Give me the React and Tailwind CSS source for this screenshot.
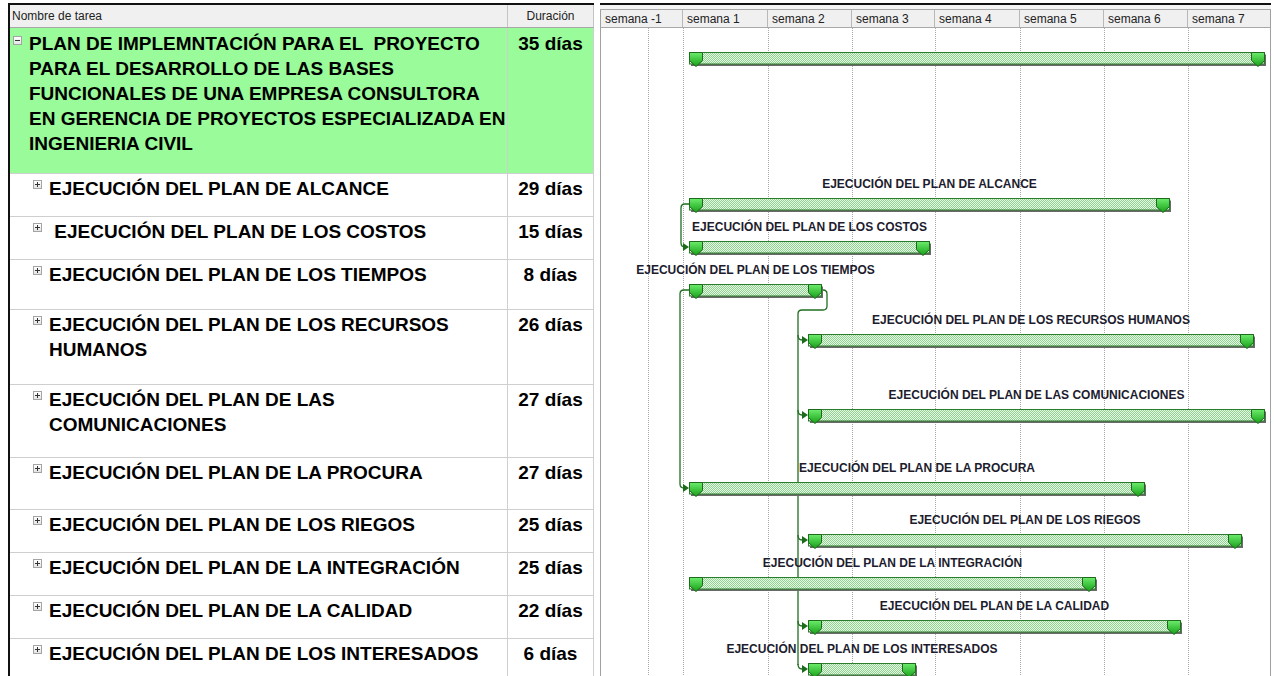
import React from "react";

const weeks = [
  { label: "semana -1", w: "w-[82px]" },
  { label: "semana 1", w: "w-[85px]" },
  { label: "semana 2", w: "w-[84px]" },
  { label: "semana 3", w: "w-[83px]" },
  { label: "semana 4", w: "w-[85px]" },
  { label: "semana 5", w: "w-[84px]" },
  { label: "semana 6", w: "w-[84px]" },
  { label: "semana 7", w: "flex-1" },
];

// x of bars in page pixels, gantt body starts at 601
const tasks = [
  {
    lines: [
      "PLAN DE IMPLEMNTACIÓN PARA EL  PROYECTO",
      "PARA EL DESARROLLO DE LAS BASES",
      "FUNCIONALES DE UNA EMPRESA CONSULTORA",
      "EN GERENCIA DE PROYECTOS ESPECIALIZADA EN",
      "INGENIERIA CIVIL",
    ],
    dur: "35 días",
    h: "h-[146px]",
    summary: true,
    bar: [689, 1265],
  },
  { lines: ["EJECUCIÓN DEL PLAN DE ALCANCE"], label: "EJECUCIÓN DEL PLAN DE ALCANCE", dur: "29 días", h: "h-[43px]", bar: [689, 1170] },
  { lines: [" EJECUCIÓN DEL PLAN DE LOS COSTOS"], label: "EJECUCIÓN DEL PLAN DE LOS COSTOS", dur: "15 días", h: "h-[43px]", bar: [689, 930] },
  { lines: ["EJECUCIÓN DEL PLAN DE LOS TIEMPOS"], label: "EJECUCIÓN DEL PLAN DE LOS TIEMPOS", dur: "8 días", h: "h-[50px]", bar: [689, 822] },
  { lines: ["EJECUCIÓN DEL PLAN DE LOS RECURSOS", "HUMANOS"], label: "EJECUCIÓN DEL PLAN DE LOS RECURSOS HUMANOS", dur: "26 días", h: "h-[75px]", bar: [808, 1254] },
  { lines: ["EJECUCIÓN DEL PLAN DE LAS", "COMUNICACIONES"], label: "EJECUCIÓN DEL PLAN DE LAS COMUNICACIONES", dur: "27 días", h: "h-[73px]", bar: [808, 1265] },
  { lines: ["EJECUCIÓN DEL PLAN DE LA PROCURA"], label: "EJECUCIÓN DEL PLAN DE LA PROCURA", dur: "27 días", h: "h-[52px]", bar: [689, 1145] },
  { lines: ["EJECUCIÓN DEL PLAN DE LOS RIEGOS"], label: "EJECUCIÓN DEL PLAN DE LOS RIEGOS", dur: "25 días", h: "h-[43px]", bar: [808, 1242] },
  { lines: ["EJECUCIÓN DEL PLAN DE LA INTEGRACIÓN"], label: "EJECUCIÓN DEL PLAN DE LA INTEGRACIÓN", dur: "25 días", h: "h-[43px]", bar: [689, 1096] },
  { lines: ["EJECUCIÓN DEL PLAN DE LA CALIDAD"], label: "EJECUCIÓN DEL PLAN DE LA CALIDAD", dur: "22 días", h: "h-[43px]", bar: [808, 1181] },
  { lines: ["EJECUCIÓN DEL PLAN DE LOS INTERESADOS"], label: "EJECUCIÓN DEL PLAN DE LOS INTERESADOS", dur: "6 días", h: "h-[43px]", bar: [808, 916] },
];

const gridX = [47, 82, 167, 251, 334, 419, 503, 587];

function Toggle({ minus }) {
  return (
    <span className="flex w-[9px] h-[9px] border border-[#a4a4a4] bg-gradient-to-b from-white to-[#e4e4e4] items-center justify-center">
      <svg width="5" height="5" viewBox="0 0 5 5" className="block">
        <path d="M0 2.5 H5" stroke="#333" strokeWidth="1" />
        {!minus && <path d="M2.5 0 V5" stroke="#333" strokeWidth="1" />}
      </svg>
    </span>
  );
}

function Bar({ w }) {
  const cap = (x) => `M${x + 0.5} 0.5 H${x + 13.5} V8.5 L${x + 7} 14.5 L${x + 0.5} 8.5 Z`;
  return (
    <svg width={w + 3} height={17} className="block overflow-visible">
      <rect x="2" y="2.5" width={w - 1} height="11.5" fill="#6a6a6a" />
      <rect x="0.5" y="0.5" width={w - 1} height="11.5" fill="url(#barfill)" stroke="#2b7d2b" />
      <path d={cap(0)} fill="url(#capfill)" stroke="#1d6a1d" />
      <path d={cap(w - 14)} fill="url(#capfill)" stroke="#1d6a1d" />
    </svg>
  );
}

function Arrow({ x, y }) {
  return <path d={`M${x - 6} ${y - 4} L${x} ${y} L${x - 6} ${y + 4} Z`} fill="#1b6b1b" />;
}

function Links() {
  const c = "#1f6f1f";
  const targets = [312, 387, 512, 598, 641];
  return (
    <svg className="absolute left-0 top-0 pointer-events-none" width="669" height="660">
      {gridX.map((x) => (
        <line key={x} x1={x + 0.5} y1="0" x2={x + 0.5} y2="660" stroke="#a9a9a9" strokeDasharray="1 1" />
      ))}
      <g fill="none" stroke={c} strokeWidth="1.3">
        <path d="M88 176 H84 Q80 176 80 180 V215 Q80 219 84 219 H86" />
        <path d="M88 262 H83 Q79 262 79 266 V456 Q79 460 83 460 H86" />
        <path d="M221 262 H222 Q226 262 226 266 V278 Q226 282 222 282 H201 Q197 282 197 286 V637" />
        {targets.map((y) => (
          <path key={y} d={`M197 ${y - 5} Q197 ${y} 201 ${y} H205`} />
        ))}
      </g>
      <Arrow x={88} y={219} />
      <Arrow x={88} y={460} />
      {targets.map((y) => (
        <Arrow key={y} x={207} y={y} />
      ))}
    </svg>
  );
}

export default function App() {
  return (
    <div className="w-[1274px] h-[676px] overflow-hidden bg-white font-['Liberation_Sans',Arial,sans-serif] text-black">
      <svg width="0" height="0" className="absolute">
        <defs>
          <pattern id="barfill" width="2" height="2" patternUnits="userSpaceOnUse">
            <rect width="2" height="2" fill="#e8f9e8" />
            <rect width="1" height="1" fill="#8fd28f" />
            <rect x="1" y="1" width="1" height="1" fill="#8fd28f" />
          </pattern>
          <linearGradient id="capfill" x1="0" y1="0" x2="0" y2="1">
            <stop offset="0" stopColor="#6cec6c" />
            <stop offset="1" stopColor="#16a016" />
          </linearGradient>
        </defs>
      </svg>

      <div className="flex pt-[3px] pl-[8px]">
        {/* tabla de tareas */}
        <div className="w-[586px] shrink-0 border-l-2 border-t-2 border-[#111] flex flex-col">
          <div className="flex h-[23px] bg-[#f0f0f0] border-b border-[#a8a8a8] text-[12px] text-[#222]">
            <div className="w-[498px] border-r border-[#c4c4c4] pl-[2px] flex items-center">Nombre de tarea</div>
            <div className="w-[86px] border-r border-[#c4c4c4] flex items-center justify-center">Duración</div>
          </div>
          {tasks.map((t, i) => (
            <div
              key={i}
              className={`flex shrink-0 ${t.h} border-b border-[#cfcfcf] ${t.summary ? "bg-[#99fb99]" : "bg-white"}`}
            >
              <div className={`w-[498px] border-r border-[#cfcfcf] flex ${t.summary ? "pl-[3px] pt-[3px]" : "pl-[23px] pt-[2px]"}`}>
                <div className={`w-[16px] shrink-0 ${t.summary ? "pt-[5px]" : "pt-[4px]"}`}>
                  <Toggle minus={t.summary} />
                </div>
                <div className="text-[19px] leading-[25px] font-bold whitespace-pre">
                  {t.lines.map((l, j) => (
                    <div key={j}>{l}</div>
                  ))}
                </div>
              </div>
              <div
                className={`w-[86px] border-r border-[#cfcfcf] text-center text-[19px] leading-[25px] font-bold ${t.summary ? "pt-[3px]" : "pt-[2px]"}`}
              >
                {t.dur}
              </div>
            </div>
          ))}
        </div>

        <div className="w-[6px] shrink-0" />

        {/* diagrama de Gantt */}
        <div className="w-[671px] shrink-0 border-t-2 border-[#111] flex flex-col">
          <div className="h-[5px] bg-[#f4f4f4] border-b border-[#a8a8a8]" />
          <div className="flex h-[18px] bg-[#f0f0f0] border-b border-[#a8a8a8] border-l border-r border-l-[#a0a0a0] border-r-[#a0a0a0] text-[12px] text-[#222]">
            {weeks.map((w) => (
              <div key={w.label} className={`${w.w} shrink-0 border-r border-[#b8b8b8] last:border-r-0 pl-[4px] flex items-center`}>
                {w.label}
              </div>
            ))}
          </div>
          <div className="relative flex-1 border-l border-r border-[#a0a0a0] h-[660px]">
            <Links />
            {tasks.map((t, i) => {
              const left = t.bar[0] - 601;
              const width = t.bar[1] - t.bar[0];
              return (
                <div key={i} className={`relative shrink-0 ${t.h}`}>
                  {t.label && (
                    <div
                      className="absolute top-[3px] flex justify-center whitespace-nowrap text-[12px] leading-[14px] font-bold text-[#1c1c2e]"
                      style={{ left, width }}
                    >
                      {t.label}
                    </div>
                  )}
                  <div className="absolute top-[24px]" style={{ left }}>
                    <Bar w={width} />
                  </div>
                </div>
              );
            })}
          </div>
        </div>
      </div>
    </div>
  );
}
